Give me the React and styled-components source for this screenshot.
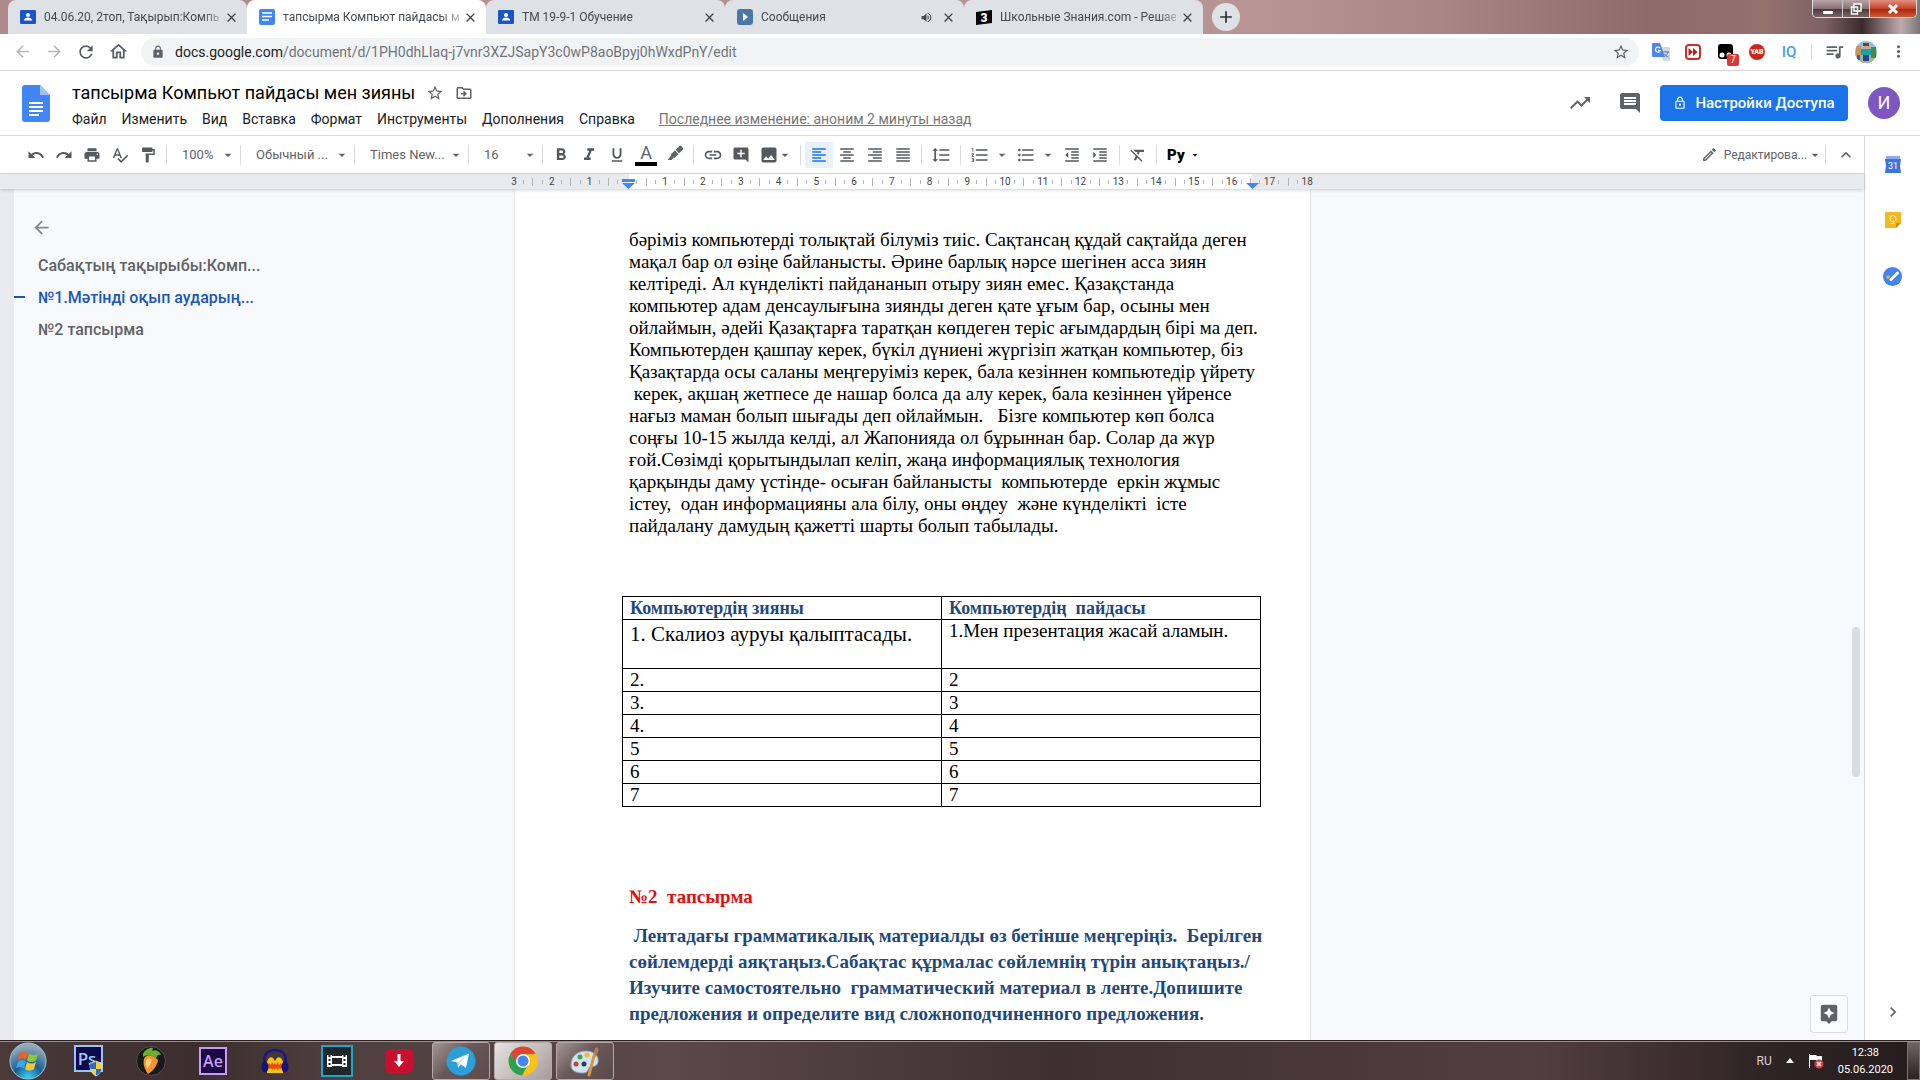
import styled, { createGlobalStyle } from 'styled-components';
import {
  MdAdd, MdAddComment, MdArrowBack, MdArrowDropDown, MdArrowForward, MdAssistant, MdClose,
  MdFormatAlignCenter, MdFormatAlignJustify, MdFormatAlignLeft, MdFormatAlignRight, MdFormatBold,
  MdFormatClear, MdFormatIndentDecrease, MdFormatIndentIncrease, MdFormatItalic,
  MdFormatLineSpacing, MdFormatListBulleted, MdFormatListNumbered, MdFormatPaint,
  MdFormatUnderlined, MdImage, MdInsertComment, MdKeyboardArrowRight, MdKeyboardArrowUp, MdLink,
  MdLock, MdMoreVert, MdOutlineDriveFileMove, MdOutlineEdit, MdOutlineHome, MdOutlineLock,
  MdPrint, MdQueueMusic, MdRedo, MdRefresh, MdSpellcheck, MdStarBorder, MdTrendingUp, MdUndo,
  MdVolumeUp,
} from 'react-icons/md';

const GlobalStyle = createGlobalStyle`
  * { box-sizing: border-box; }
  html, body, #root { height: 100%; }
  body { margin: 0; overflow: hidden; font-family: Roboto, sans-serif; }
  button { font: inherit; color: inherit; background: none; border: none; padding: 0; cursor: pointer; }
  svg { display: block; flex: none; }
`;

const tabs = [
  { title: '04.06.20, 2топ, Тақырып:Компь', icon: 'classroom' },
  { title: 'тапсырма Компьют пайдасы ме', icon: 'docs', active: true },
  { title: 'ТМ 19-9-1 Обучение', icon: 'classroom' },
  { title: 'Сообщения', icon: 'play', sound: true },
  { title: 'Школьные Знания.com - Решае', icon: 'znania' },
];

const menus = ['Файл', 'Изменить', 'Вид', 'Вставка', 'Формат', 'Инструменты', 'Дополнения', 'Справка'];

const bodyLines = [
  'бәріміз компьютерді толықтай білуміз тиіс. Сақтансаң құдай сақтайда деген',
  'мақал бар ол өзіңе байланысты. Әрине барлық нәрсе шегінен асса зиян',
  'келтіреді. Ал күнделікті пайдананып отыру зиян емес. Қазақстанда',
  'компьютер адам денсаулығына зиянды деген қате ұғым бар, осыны мен',
  'ойлаймын, әдейі Қазақтарға таратқан көпдеген теріс ағымдардың бірі ма деп.',
  'Компьютерден қашпау керек, бүкіл дүниені жүргізіп жатқан компьютер, біз',
  'Қазақтарда осы саланы меңгеруіміз керек, бала кезіннен компьютедір үйрету',
  ' керек, ақшаң жетпесе де нашар болса да алу керек, бала кезіннен үйренсе',
  'нағыз маман болып шығады деп ойлаймын.   Бізге компьютер көп болса',
  'соңғы 10-15 жылда келді, ал Жапонияда ол бұрыннан бар. Солар да жүр',
  'ғой.Сөзімді қорытындылап келіп, жаңа информациялық технология',
  'қарқынды даму үстінде- осыған байланысты  компьютерде  еркін жұмыс',
  'істеу,  одан информацияны ала білу, оны өңдеу  және күнделікті  істе',
  'пайдалану дамудың қажетті шарты болып табылады.',
];

const taskLines = [
  ' Лентадағы грамматикалық материалды өз бетінше меңгеріңіз.  Берілген',
  'сөйлемдерді аяқтаңыз.Сабақтас құрмалас сөйлемнің түрін анықтаңыз./',
  'Изучите самостоятельно  грамматический материал в ленте.Допишите',
  'предложения и определите вид сложноподчиненного предложения.',
];

const rows = [['2.', '2'], ['3.', '3'], ['4.', '4'], ['5', '5'], ['6', '6'], ['7', '7']];

const rulerMarks = [3, 2, 1, 0, 1, 2, 3, 4, 5, 6, 7, 8, 9, 10, 11, 12, 13, 14, 15, 16, 17, 18];

/* ---------- small drawings ---------- */

const ClassroomIcon = () => (
  <svg width="16" height="14" viewBox="0 0 16 14">
    <rect width="16" height="14" rx="1" fill="#1a56c4" />
    <circle cx="8" cy="5" r="2" fill="#fff" />
    <path d="M4 10.500c0-2 2-3 4-3s4 1 4 3z" fill="#fff" />
  </svg>
);

const DocsSmallIcon = () => (
  <svg width="16" height="16" viewBox="0 0 16 16">
    <rect width="16" height="16" rx="2" fill="#4285f4" />
    <path d="M3 4h10M3 7.500h10M3 11h7" stroke="#fff" strokeWidth="1.600" />
  </svg>
);

const PlayIcon = () => (
  <svg width="16" height="16" viewBox="0 0 16 16">
    <rect width="16" height="16" rx="3" fill="#4a76a8" />
    <path d="M6 4v8l5-4z" fill="#fff" />
  </svg>
);

const ZnaniaIcon = () => (
  <svg width="16" height="15" viewBox="0 0 16 15">
    <path d="M0 2 16 0v13L0 15z" fill="#000" />
    <text x="8" y="12" fontSize="12" fontWeight="900" fontFamily="Roboto" textAnchor="middle" fill="#fff">3</text>
  </svg>
);

const tabIcons = { classroom: ClassroomIcon, docs: DocsSmallIcon, play: PlayIcon, znania: ZnaniaIcon };

const DocsLogo = () => (
  <svg width="28" height="37" viewBox="0 0 28 37">
    <path d="M3 0h15l10 10v24a3 3 0 0 1-3 3H3a3 3 0 0 1-3-3V3a3 3 0 0 1 3-3z" fill="#4285f4" />
    <path d="M18 0l10 10H18z" fill="#a1c2fa" />
    <path d="M7 18h14M7 22h14M7 26h14M7 30h10" stroke="#fff" strokeWidth="2" />
  </svg>
);

const TranslateIcon = () => (
  <svg width="18" height="18" viewBox="0 0 18 18">
    <path d="M7 4h10a1 1 0 0 1 1 1v12a1 1 0 0 1-1 1h-6z" fill="#d5d8dc" />
    <path d="M11 9h6M14 8v1M16 9c-.5 2-2 4-4 5M12.500 11c1 1.500 2 2.500 4 3" stroke="#5b7fb5" fill="none" />
    <path d="M1 0h7l5 14H1a1 1 0 0 1-1-1V1a1 1 0 0 1 1-1z" fill="#4a86ee" />
    <path d="M8 5.200A2.500 2.500 0 1 0 8.300 7.400H6" stroke="#fff" strokeWidth="1.300" fill="none" />
  </svg>
);

const ForwardExtIcon = () => (
  <svg width="16" height="16" viewBox="0 0 16 16">
    <rect x="1" y="1" width="14" height="14" rx="3" fill="#fff" stroke="#c9302c" strokeWidth="2" />
    <path d="M3.500 4 8 8l-4.500 4zM8 4l4.500 4L8 12z" fill="#b3201c" />
  </svg>
);

const MonkeyIcon = () => (
  <svg width="15" height="15" viewBox="0 0 15 15">
    <rect width="15" height="15" rx="3" fill="#000" />
    <circle cx="4" cy="11" r="2.500" fill="#fff" />
    <circle cx="11" cy="11" r="2.500" fill="#fff" />
  </svg>
);

const PlayerAvatar = () => (
  <svg width="22" height="22" viewBox="0 0 22 22">
    <clipPath id="av"><circle cx="11" cy="11" r="11" /></clipPath>
    <g clipPath="url(#av)">
      <rect width="22" height="22" fill="#8fc0e4" />
      <rect y="13" width="22" height="9" fill="#a8b58a" />
      <rect x="1" y="5" width="5" height="9" fill="#c9925a" />
      <rect x="2" y="14" width="3" height="5" fill="#3f5d9c" />
      <rect x="16" y="6" width="5" height="11" fill="#4f8a3c" />
      <rect x="8" y="2" width="6" height="6" fill="#6a4129" />
      <rect x="8" y="5" width="6" height="3" fill="#d9a57c" />
      <rect x="6" y="8" width="10" height="6" fill="#12a5ae" />
      <rect x="8" y="14" width="6" height="6" fill="#2d3f9c" />
    </g>
  </svg>
);

const HighlighterIcon = () => (
  <svg width="20" height="20" viewBox="0 0 20 20" fill="#5f6368">
    <path d="M14 1.500a2 2 0 0 1 2.800 0l.7.700a2 2 0 0 1 0 2.800l-3.300 3.200-3.500-3.500zM9.800 5.500l3.700 3.700-3.800 3.600-1-.200-2.200 2.400H2.500l3.700-4.500-.200-1.200z" />
  </svg>
);

const CalendarIcon = () => (
  <svg width="16" height="17" viewBox="0 0 16 17">
    <path d="M1 0h14v4H1z" fill="#8ab0f0" />
    <path d="M0 3h16l-1 7 1 7H0l1-7z" fill="#3f74dd" />
    <text x="8" y="13" fontSize="9" fontFamily="Roboto" textAnchor="middle" fill="#fff">31</text>
  </svg>
);

const KeepIcon = () => (
  <svg width="16" height="16" viewBox="0 0 16 16">
    <path d="M1 0h14a1 1 0 0 1 1 1v10l-5 5H1a1 1 0 0 1-1-1V1a1 1 0 0 1 1-1z" fill="#f5b720" />
    <path d="M16 11l-5 5v-5z" fill="#d99012" />
    <path d="M6.500 9.500C4 7.500 5 3.500 8 3.500s4 4 1.500 6zM6.500 11.500h3" stroke="#fff" fill="none" />
  </svg>
);

const TasksIcon = () => (
  <svg width="19" height="19" viewBox="0 0 19 19">
    <circle cx="9.500" cy="9.500" r="9.500" fill="#4284f3" />
    <path d="M8 12.500 14.500 6" stroke="#fff" strokeWidth="3" strokeLinecap="round" />
    <circle cx="5" cy="10" r="1.800" fill="#e8b72a" />
  </svg>
);

const StartOrb = () => (
  <svg width="38" height="38" viewBox="0 0 38 38">
    <defs>
      <radialGradient id="orb" cx="50%" cy="95%" r="85%">
        <stop offset="0" stopColor="#35d0f5" />
        <stop offset="0.450" stopColor="#1a5f96" />
        <stop offset="1" stopColor="#8fa9b8" />
      </radialGradient>
    </defs>
    <circle cx="19" cy="19" r="18" fill="url(#orb)" stroke="#9fc4d8" />
    <path d="M10 11c3-2 6-2 9 0l-2 7c-3-2-5-2-8 0z" fill="#e8622c" />
    <path d="M20 11.500c3 2 6 2 9 0l-2 7c-3 2-6 2-9 0z" fill="#8cc63e" />
    <path d="M9 19.500c3-2 5-2 8 0l-2 7c-3-2-6-2-8 0z" fill="#3fa4e8" />
    <path d="M18 20c3 2 6 2 9 0l-2 7c-3 2-6 2-9 0z" fill="#fbc62c" />
  </svg>
);

const PhotoshopIcon = () => (
  <svg width="30" height="32" viewBox="0 0 30 32">
    <rect x="1" y="1" width="27" height="25" fill="#0c0a4a" stroke="#9fc0f5" strokeWidth="2" />
    <text x="13" y="20" fontSize="17" fontWeight="600" fontFamily="Open Sans" textAnchor="middle" fill="#9fc8fa">Ps</text>
    <path d="M16 18c3 0 4-1 6-2 2 1 4 2 6 2 0 6-1 10-6 13-5-3-6-7-6-13z" fill="#f6d02e" stroke="#dde6ee" />
    <path d="M22 16.500V24h-5.500c-.5-2-.5-3-.5-5.500 3 0 4-1 6-2zM22 24h5.500c-.7 3-2 5-5.500 6.500z" fill="#2a69c8" />
  </svg>
);

const FlIcon = () => (
  <svg width="30" height="32" viewBox="0 0 30 32">
    <circle cx="15" cy="16" r="14.500" fill="#17191a" stroke="#4c5254" />
    <path d="M9 12c5-3 9-1 13 3-1 6-5 11-10 14-4-5-6-13-3-17z" fill="#f9932a" />
    <path d="M11 14c2-1 4 0 5 1-1 4-3 7-5 9-1-4-2-8 0-10z" fill="#ffd08a" />
    <path d="M7 9c2-5 8-7 10-6l-1 3c4-2 8 1 9 4-3-1-4 0-5 4-3-3-8-5-13-2z" fill="#6fae2c" />
  </svg>
);

const AfterEffectsIcon = () => (
  <svg width="28" height="28" viewBox="0 0 28 28">
    <rect x="1" y="1" width="26" height="26" fill="#1c0a44" stroke="#c79af3" strokeWidth="2" />
    <text x="14" y="20" fontSize="16" fontWeight="600" fontFamily="Open Sans" textAnchor="middle" fill="#c79af3">Ae</text>
  </svg>
);

const AudacityIcon = () => (
  <svg width="28" height="26" viewBox="0 0 28 26">
    <path d="M4 16C1 6 8 2 14 2s13 4 10 14" stroke="#16168c" strokeWidth="2.500" fill="none" />
    <path d="M6 25V14c1-4 4-6 6-4l2 3 2-3c2-2 5 0 6 4v11z" fill="#f9c513" />
    <path d="M6 18l2-3 2 2 1-3 2 3 1-3 1 3 2-3 1 3 2-2 2 3-2 3-2-1-1 2-2-2-1 2-1-2-2 2-1-2-2 1z" fill="#ee4a12" />
    <ellipse cx="4" cy="19" rx="3.500" ry="5.500" fill="#13137c" />
    <ellipse cx="24" cy="19" rx="3.500" ry="5.500" fill="#13137c" />
  </svg>
);

const MovieIcon = () => (
  <svg width="32" height="32" viewBox="0 0 32 32">
    <rect x="1" y="1" width="30" height="30" fill="#20262a" stroke="#1fa5c9" strokeWidth="2" />
    <path d="M6 10h5v12H6zM21 10h5v12h-5z" fill="#fff" />
    <path d="M10 12h12M10 20h12" stroke="#fff" strokeWidth="2" />
    <path d="M8.500 10v12M23.500 10v12" stroke="#20262a" strokeWidth="2" strokeDasharray="2 2" />
  </svg>
);

const DownloadIcon = () => (
  <svg width="28" height="24" viewBox="0 0 28 24">
    <rect width="28" height="24" rx="5" fill="#c8102e" />
    <path d="M12.500 5h3v7H19l-5 6-5-6h3.500z" fill="#fff" />
  </svg>
);

const TelegramIcon = () => (
  <svg width="30" height="30" viewBox="0 0 30 30">
    <circle cx="15" cy="15" r="14.500" fill="#2a9fd8" />
    <path d="M5 15 23 7.500 20 22l-5-3.500-3 3-.5-5z" fill="#fff" />
    <path d="M11.500 16.500 20 10l-7 8-1 3.500z" fill="#c4dbe8" />
  </svg>
);

const ChromeIcon = () => (
  <svg width="30" height="30" viewBox="0 0 30 30">
    <circle cx="15" cy="15" r="14.500" fill="#fbc116" />
    <path d="M2.440 7.750A14.500 14.500 0 0 1 27.560 7.750L15 8.500 8.900 18.500z" fill="#dc4437" />
    <path d="M2.440 7.750A14.500 14.500 0 0 0 14 29.500l6.600-11.500H9.400z" fill="#2ca152" />
    <circle cx="15" cy="15" r="7" fill="#fff" />
    <circle cx="15" cy="15" r="5.500" fill="#4285f4" />
  </svg>
);

const PaintIcon = () => (
  <svg width="32" height="32" viewBox="0 0 32 32">
    <path d="M2 20C2 11 9 6 17 6s13 5 12 11c-1 5-5 4-8 5-3 2-1 6-7 6C7 28 2 26 2 20z" fill="#cfe3f2" stroke="#8fa9bf" />
    <circle cx="7" cy="19" r="2.500" fill="#d63a2c" />
    <circle cx="11" cy="12" r="2.500" fill="#3fa04a" />
    <circle cx="18" cy="10" r="2.500" fill="#f0b92c" />
    <circle cx="15" cy="19" r="2.500" fill="#1d3f66" />
    <path d="M26 3c3-2 4 1 3 4l-3 5-2-1z" fill="#b07a4c" />
    <path d="M25 11 20 30" stroke="#d99544" strokeWidth="3" strokeLinecap="round" />
  </svg>
);

const FlagIcon = () => (
  <svg width="16" height="16" viewBox="0 0 16 16">
    <path d="M1.500 1v14" stroke="#fff" />
    <path d="M2 2h6l1 1h5v5H9L8 7H2z" fill="#fff" />
    <circle cx="11" cy="11" r="4.500" fill="#d63a34" />
    <path d="M9 9l4 4M13 9l-4 4" stroke="#fff" strokeWidth="1.500" />
  </svg>
);

/* ---------- component ---------- */

const Tool = ({ icon: Icon, label, size = 18, ...rest }) => (
  <ToolButton aria-label={label} {...rest}><Icon size={size} /></ToolButton>
);

const App = () => {
  return (
    <Screen>
      <GlobalStyle />
      <TabStrip>
        {tabs.map((tab, i) => {
          const Icon = tabIcons[tab.icon];
          return (
            <Tab key={i} $active={tab.active}>
              <Icon />
              <TabTitle>{tab.title}</TabTitle>
              {tab.sound && <MdVolumeUp size={13} />}
              <TabClose aria-label="Закрыть"><MdClose size={15} /></TabClose>
            </Tab>
          );
        })}
        <NewTab aria-label="Новая вкладка"><MdAdd size={20} /></NewTab>
        <WindowButtons>
          <WindowButton $w={29} aria-label="Свернуть">
            <svg width="12" height="10"><path d="M1 7h10v3H1z" fill="#fff" /></svg>
          </WindowButton>
          <WindowButton $w={27} aria-label="Развернуть">
            <svg width="12" height="12"><path d="M4 1h7v7H4zM1.500 4h6v7h-6z" fill="#555" stroke="#fff" strokeWidth="1.500" /></svg>
          </WindowButton>
          <WindowButton $w={47} $close aria-label="Закрыть окно">
            <svg width="12" height="10"><path d="M2 1l8 8M10 1 2 9" stroke="#fff" strokeWidth="3" /></svg>
          </WindowButton>
        </WindowButtons>
      </TabStrip>

      <AddressBar>
        <NavButton $off aria-label="Назад"><MdArrowBack size={19} /></NavButton>
        <NavButton $off aria-label="Вперёд"><MdArrowForward size={19} /></NavButton>
        <NavButton aria-label="Обновить"><MdRefresh size={20} /></NavButton>
        <NavButton aria-label="Домой"><MdOutlineHome size={21} /></NavButton>
        <Omnibox>
          <MdLock size={14} />
          <Url><b>docs.google.com</b>/document/d/1PH0dhLIaq-j7vnr3XZJSapY3c0wP8aoBpyj0hWxdPnY/edit</Url>
          <MdStarBorder size={18} />
        </Omnibox>
        <Extensions>
          <Extension aria-label="Переводчик"><TranslateIcon /></Extension>
          <Extension aria-label="Перемотка"><ForwardExtIcon /></Extension>
          <Extension aria-label="Скрипты"><MonkeyIcon /><Badge>7</Badge></Extension>
          <Extension aria-label="YAB"><YabDot>YAB</YabDot></Extension>
          <Extension aria-label="IQ"><IqText>IQ</IqText></Extension>
          <ExtLine />
          <Extension aria-label="Плейлист"><MdQueueMusic size={21} /></Extension>
          <Extension aria-label="Профиль"><PlayerAvatar /></Extension>
          <Extension aria-label="Меню"><MdMoreVert size={19} /></Extension>
        </Extensions>
      </AddressBar>

      <DocsHeader>
        <DocsLogo />
        <HeaderText>
          <TitleRow>
            <DocTitle>тапсырма Компьют пайдасы мен зияны</DocTitle>
            <button aria-label="Пометить"><MdStarBorder size={18} /></button>
            <button aria-label="Переместить"><MdOutlineDriveFileMove size={18} /></button>
          </TitleRow>
          <MenuRow>
            {menus.map((m) => <MenuButton key={m}>{m}</MenuButton>)}
            <LastEdit href="#history">Последнее изменение: аноним 2 минуты назад</LastEdit>
          </MenuRow>
        </HeaderText>
        <HeaderActions>
          <button aria-label="Статистика"><MdTrendingUp size={24} /></button>
          <button aria-label="Комментарии"><MdInsertComment size={24} /></button>
          <ShareButton><MdOutlineLock size={14} />Настройки Доступа</ShareButton>
          <Avatar>И</Avatar>
        </HeaderActions>
      </DocsHeader>

      <Workspace>
        <Editor>
          <Toolbar>
            <Group>
              <Tool icon={MdUndo} label="Отменить" />
              <Tool icon={MdRedo} label="Повторить" />
              <Tool icon={MdPrint} label="Печать" />
              <Tool icon={MdSpellcheck} label="Правописание" />
              <Tool icon={MdFormatPaint} label="Копировать формат" />
            </Group>
            <Line />
            <Picker $w={69}>100%<MdArrowDropDown size={16} /></Picker>
            <Line />
            <Picker $w={109}>Обычный ...<MdArrowDropDown size={16} /></Picker>
            <Line />
            <Picker $w={109}>Times New...<MdArrowDropDown size={16} /></Picker>
            <Line />
            <Picker $w={69}>16<MdArrowDropDown size={16} /></Picker>
            <Line />
            <Group>
              <Tool icon={MdFormatBold} label="Полужирный" size={20} />
              <Tool icon={MdFormatItalic} label="Курсив" size={20} />
              <Tool icon={MdFormatUnderlined} label="Подчёркнутый" />
              <TextColor aria-label="Цвет текста">A</TextColor>
              <Tool icon={HighlighterIcon} label="Цвет выделения" />
            </Group>
            <Line />
            <Group $wide>
              <Tool icon={MdLink} label="Ссылка" size={20} />
              <Tool icon={MdAddComment} label="Комментарий" />
              <Tool icon={MdImage} label="Изображение" size={20} />
              <Caret $tight aria-label="Варианты изображения"><MdArrowDropDown size={16} /></Caret>
            </Group>
            <Line />
            <Group>
              <Tool icon={MdFormatAlignLeft} label="По левому краю" $on />
              <Tool icon={MdFormatAlignCenter} label="По центру" />
              <Tool icon={MdFormatAlignRight} label="По правому краю" />
              <Tool icon={MdFormatAlignJustify} label="По ширине" />
            </Group>
            <Line />
            <Group $wide>
              <Tool icon={MdFormatLineSpacing} label="Интервал" size={20} />
            </Group>
            <Line />
            <Group $wide>
              <Tool icon={MdFormatListNumbered} label="Нумерованный список" size={20} />
              <Caret aria-label="Варианты нумерации"><MdArrowDropDown size={16} /></Caret>
              <Tool icon={MdFormatListBulleted} label="Маркированный список" size={20} />
              <Caret aria-label="Варианты маркеров"><MdArrowDropDown size={16} /></Caret>
              <Tool icon={MdFormatIndentDecrease} label="Уменьшить отступ" />
              <Tool icon={MdFormatIndentIncrease} label="Увеличить отступ" />
            </Group>
            <Line />
            <Group>
              <Tool icon={MdFormatClear} label="Очистить формат" />
            </Group>
            <Line />
            <InputTool>Ру<MdArrowDropDown size={12} /></InputTool>
            <ModeButton><MdOutlineEdit size={17} />Редактирова...<MdArrowDropDown size={16} /></ModeButton>
            <Line />
            <CollapseButton aria-label="Скрыть меню"><MdKeyboardArrowUp size={20} /></CollapseButton>
          </Toolbar>

          <RulerBar>
            <Ruler>
              {rulerMarks.map((n, i) => (
                <RulerCell key={i}>
                  <Tick $h={i === 0 ? 0 : 8} />
                  <Tick $h={i === 0 ? 0 : 4} />
                  <RulerNumber>{n || ''}</RulerNumber>
                  <Tick $h={i === rulerMarks.length - 1 ? 0 : 4} />
                </RulerCell>
              ))}
              <Marker $left="16.6%">
                <svg width="13" height="10"><path d="M0 0h13v3H0zM0 4h13L6.500 10z" fill="#4285f4" /></svg>
              </Marker>
              <Marker $left="91.6%">
                <svg width="13" height="10"><path d="M0 4h13L6.500 10z" fill="#4285f4" /></svg>
              </Marker>
            </Ruler>
          </RulerBar>

          <Canvas>
            <Outline>
              <OutlineBack aria-label="Закрыть структуру"><MdArrowBack size={21} /></OutlineBack>
              <OutlineItem href="#topic">Сабақтың тақырыбы:Комп...</OutlineItem>
              <OutlineItem href="#task1" $active>№1.Мәтінді оқып аударың...</OutlineItem>
              <OutlineItem href="#task2">№2 тапсырма</OutlineItem>
            </Outline>
            <Page>
              <Paragraph>{bodyLines.join('\n')}</Paragraph>
              <DocTable>
                <thead>
                  <tr>
                    <th>Компьютердің зияны</th>
                    <th>Компьютердің&nbsp; пайдасы</th>
                  </tr>
                </thead>
                <tbody>
                  <TallRow>
                    <BigCell>1. Скалиоз ауруы қалыптасады.</BigCell>
                    <td>1.Мен презентация жасай аламын.</td>
                  </TallRow>
                  {rows.map(([a, b]) => (
                    <tr key={b}><td>{a}</td><td>{b}</td></tr>
                  ))}
                </tbody>
              </DocTable>
              <TaskTitle>№2&nbsp; тапсырма</TaskTitle>
              <TaskText>{taskLines.join('\n')}</TaskText>
            </Page>
            <RightSpace />
            <ScrollThumb />
            <ExploreButton aria-label="Анализ данных"><MdAssistant size={22} /></ExploreButton>
          </Canvas>
        </Editor>

        <SidePanel>
          <button aria-label="Календарь"><CalendarIcon /></button>
          <button aria-label="Keep"><KeepIcon /></button>
          <button aria-label="Задачи"><TasksIcon /></button>
          <PanelToggle aria-label="Скрыть панель"><MdKeyboardArrowRight size={20} /></PanelToggle>
        </SidePanel>
      </Workspace>

      <Taskbar>
        <TaskButton $first aria-label="Пуск"><StartOrb /></TaskButton>
        <TaskButton aria-label="Photoshop"><PhotoshopIcon /></TaskButton>
        <TaskButton aria-label="FL Studio"><FlIcon /></TaskButton>
        <TaskButton aria-label="After Effects"><AfterEffectsIcon /></TaskButton>
        <TaskButton aria-label="Audacity"><AudacityIcon /></TaskButton>
        <TaskButton aria-label="Movie Studio"><MovieIcon /></TaskButton>
        <TaskButton aria-label="Загрузки"><DownloadIcon /></TaskButton>
        <TaskButton $open aria-label="Telegram"><TelegramIcon /></TaskButton>
        <TaskButton $open $current aria-label="Chrome"><ChromeIcon /></TaskButton>
        <TaskButton $open aria-label="Paint"><PaintIcon /></TaskButton>
        <Tray>
          <Lang>RU</Lang>
          <svg width="8" height="5"><path d="M0 5l4-5 4 5z" fill="#fff" /></svg>
          <FlagIcon />
          <Clock><span>12:38</span><span>05.06.2020</span></Clock>
          <ShowDesktop aria-label="Показать рабочий стол" />
        </Tray>
      </Taskbar>
    </Screen>
  );
};

/* ---------- browser ---------- */

const Screen = styled.div`
  display: flex;
  flex-direction: column;
  height: 100vh;
  overflow: hidden;
  background: #fff;
  color: #5f6368;
`;

const TabStrip = styled.div`
  display: flex;
  align-items: flex-start;
  height: 34px;
  padding-left: 8px;
  flex: none;
  background: linear-gradient(90deg, #b08a8a 0%, #b89494 66%, #a98585 75%, #8e6a6a 86%, #94706f 92%, #7d6263 95%, #3a2a2a 97%, #c0aab0 99%, #777 100%);
`;

const Tab = styled.div`
  display: flex;
  align-items: center;
  gap: 8px;
  width: 239px;
  height: 34px;
  padding: 0 8px 0 12px;
  border-radius: 8px 8px 0 0;
  background: ${(p) => (p.$active ? '#fff' : '#dee1e6')};
  color: #45494d;
`;

const TabTitle = styled.span`
  flex: 1;
  min-width: 0;
  margin-right: -4px;
  white-space: nowrap;
  font-size: 12px;
  line-height: 16px;
  mask-image: linear-gradient(90deg, #000 90%, rgba(0, 0, 0, 0.3));
`;

const TabClose = styled.button`
  color: #3c4043;
`;

const NewTab = styled.button`
  display: flex;
  align-items: center;
  justify-content: center;
  width: 28px;
  height: 28px;
  margin: 3px 0 0 9px;
  border-radius: 50%;
  background: #dee1e6;
  color: #2b2e31;
`;

const WindowButtons = styled.div`
  display: flex;
  margin: 0 3px 0 auto;
  border: 1px solid #ddd;
  border-top: none;
  border-radius: 0 0 5px 5px;
  overflow: hidden;
`;

const WindowButton = styled.button`
  display: flex;
  align-items: center;
  justify-content: center;
  width: ${(p) => p.$w}px;
  height: 17px;
  background: ${(p) => (p.$close
    ? 'linear-gradient(#e0907c, #c8432a 50%, #a82410 51%, #d05a30)'
    : 'linear-gradient(#b8a4a6, #8a7274 50%, #4a3638 51%, #7a6466)')};
  & + & { border-left: 1px solid #ccc; }
`;

const AddressBar = styled.div`
  display: flex;
  align-items: center;
  height: 37px;
  padding: 0 6px 1px;
  flex: none;
  border-bottom: 1px solid #d5d7da;
`;

const NavButton = styled.button`
  display: flex;
  align-items: center;
  justify-content: center;
  width: 32px;
  flex: none;
  color: ${(p) => (p.$off ? '#b4b6b9' : '#5a5d61')};
`;

const Omnibox = styled.div`
  display: flex;
  align-items: center;
  gap: 10px;
  flex: 1;
  min-width: 0;
  height: 28px;
  margin-left: 7px;
  padding: 0 9px 0 10px;
  border-radius: 14px;
  background: #f1f3f4;
`;

const Url = styled.span`
  flex: 1;
  overflow: hidden;
  white-space: nowrap;
  font-size: 14px;
  color: #70757a;
  b { font-weight: normal; color: #202124; }
`;

const Extensions = styled.div`
  display: flex;
  align-items: center;
  margin-left: 6px;
  flex: none;
`;

const Extension = styled.button`
  position: relative;
  display: flex;
  align-items: center;
  justify-content: center;
  width: 32px;
  height: 28px;
`;

const Badge = styled.span`
  position: absolute;
  right: 2px;
  bottom: 0;
  width: 12px;
  height: 12px;
  border-radius: 2px;
  background: #d93a36;
  color: #fff;
  font-size: 10px;
  line-height: 12px;
`;

const YabDot = styled.span`
  width: 16px;
  height: 16px;
  border-radius: 50%;
  background: #c8281f;
  color: #fff;
  font-size: 7px;
  font-weight: 900;
  line-height: 16px;
`;

const IqText = styled.span`
  font-size: 15px;
  font-weight: 500;
  color: #4a9be8;
`;

const ExtLine = styled.span`
  width: 1px;
  height: 16px;
  margin: 0 6px;
  background: #d0d2d5;
`;

/* ---------- docs header ---------- */

const DocsHeader = styled.header`
  display: flex;
  align-items: center;
  height: 65px;
  padding: 0 20px 0 22px;
  flex: none;
  border-bottom: 1px solid #d8dadd;
`;

const HeaderText = styled.div`
  display: flex;
  flex-direction: column;
  gap: 4px;
  margin-left: 22px;
  padding-top: 4px;
`;

const TitleRow = styled.div`
  display: flex;
  align-items: center;
  gap: 11px;
`;

const DocTitle = styled.h1`
  margin: 0;
  font-size: 18px;
  line-height: 24px;
  font-weight: 400;
  color: #000;
`;

const MenuRow = styled.nav`
  display: flex;
  align-items: center;
  gap: 15px;
`;

const MenuButton = styled.button`
  font-size: 14px;
  line-height: 20px;
  color: #202124;
`;

const LastEdit = styled.a`
  margin-left: 9px;
  font-size: 14px;
  line-height: 20px;
  color: #777;
`;

const HeaderActions = styled.div`
  display: flex;
  align-items: center;
  gap: 26px;
  margin-left: auto;
`;

const ShareButton = styled.button`
  display: flex;
  align-items: center;
  justify-content: center;
  gap: 8px;
  width: 188px;
  height: 36px;
  margin: 0 -6px 0 -8px;
  border-radius: 4px;
  background: #1a73e8;
  color: #fff;
  font-size: 15px;
  font-weight: 500;
`;

const Avatar = styled.div`
  width: 32px;
  height: 32px;
  border-radius: 50%;
  background: #7e57c2;
  color: #fff;
  font-size: 18px;
  line-height: 32px;
  text-align: center;
`;

/* ---------- toolbar ---------- */

const Workspace = styled.div`
  display: flex;
  flex: 1;
  min-height: 0;
`;

const Editor = styled.main`
  display: flex;
  flex-direction: column;
  flex: 1;
  min-width: 0;
`;

const Toolbar = styled.div`
  display: flex;
  align-items: center;
  height: 38px;
  padding-left: 20px;
  flex: none;
  border-bottom: 1px solid #d8dadd;
  font-size: 13px;
`;

const Group = styled.div`
  display: flex;
  align-items: center;
  padding: 0 ${(p) => (p.$wide ? 3 : 2)}px;
`;

const Line = styled.span`
  width: 1px;
  height: 20px;
  margin: 0 2px;
  background: #d8dadd;
`;

const ToolButton = styled.button`
  display: flex;
  align-items: center;
  justify-content: center;
  width: 28px;
  height: 26px;
  border-radius: 2px;
  background: ${(p) => (p.$on ? '#e8f0fe' : 'none')};
  color: ${(p) => (p.$on ? '#1a73e8' : '#55595d')};
`;

const Picker = styled.button`
  display: flex;
  align-items: center;
  justify-content: space-between;
  width: ${(p) => p.$w}px;
  padding: 0 2px 0 13px;
  white-space: nowrap;
`;

const TextColor = styled.button`
  width: 22px;
  margin: 0 4px;
  border-bottom: 4px solid #000;
  font-size: 18px;
  line-height: 18px;
`;

const Caret = styled.button`
  width: 18px;
  margin-left: ${(p) => (p.$tight ? -6 : 0)}px;
`;

const InputTool = styled.button`
  display: flex;
  align-items: center;
  gap: 4px;
  margin-left: 8px;
  color: #000;
  font-size: 15px;
  font-weight: 900;
`;

const ModeButton = styled.button`
  display: flex;
  align-items: center;
  margin-left: auto;
  font-size: 12px;
  white-space: nowrap;
  svg:first-child { margin-right: 6px; }
`;

const CollapseButton = styled.button`
  display: flex;
  justify-content: center;
  width: 36px;
`;

/* ---------- ruler ---------- */

const RulerBar = styled.div`
  display: flex;
  justify-content: center;
  height: 15px;
  padding-right: 52px;
  flex: none;
  background: #e8eaed;
  box-shadow: 0 1px 3px rgba(60, 64, 67, 0.25);
  z-index: 1;
`;

const Ruler = styled.div`
  position: relative;
  display: flex;
  width: 831px;
  background: linear-gradient(90deg, transparent 16.6%, #fff 16.6%, #fff 91.6%, transparent 91.6%);
`;

const RulerCell = styled.div`
  display: grid;
  grid-template-columns: repeat(4, 1fr);
  align-items: center;
  justify-items: center;
  flex: 1;
`;

const Tick = styled.span`
  width: 1px;
  height: ${(p) => p.$h}px;
  background: #b4b6b9;
`;

const RulerNumber = styled.span`
  width: 0;
  display: flex;
  justify-content: center;
  font-size: 10px;
  color: #444;
`;

const Marker = styled.span`
  position: absolute;
  left: ${(p) => p.$left};
  bottom: 0;
  margin-left: -6px;
`;

/* ---------- document ---------- */

const Canvas = styled.div`
  position: relative;
  display: flex;
  flex: 1;
  min-height: 0;
  padding-right: 53px;
  overflow: hidden;
  background: #f8f9fa;
`;

const Outline = styled.aside`
  display: flex;
  flex-direction: column;
  align-items: flex-start;
  flex: 1 1 0;
  min-width: 0;
  padding-top: 28px;
  border-left: 14px solid #e8eaed;
`;

const OutlineBack = styled.button`
  margin: 0 0 11px 17px;
  color: #80868b;
`;

const OutlineItem = styled.a`
  display: flex;
  align-items: center;
  height: 32px;
  padding-left: 24px;
  font-size: 16px;
  font-weight: 500;
  white-space: nowrap;
  text-decoration: none;
  color: ${(p) => (p.$active ? '#1a57b8' : '#5f6368')};
  &::before {
    content: '';
    width: 11px;
    height: 2px;
    margin: 0 13px 0 -24px;
    background: ${(p) => (p.$active ? '#1a57b8' : 'transparent')};
  }
`;

const Page = styled.article`
  width: 795px;
  flex: none;
  padding: 40px 49px 0 114px;
  background: #fff;
  box-shadow: 0 0 2px rgba(60, 64, 67, 0.3);
  font-family: 'Liberation Serif', serif;
  font-size: 19px;
  color: #000;
`;

const Paragraph = styled.p`
  margin: 0;
  line-height: 22px;
  white-space: pre;
`;

const DocTable = styled.table`
  width: 639px;
  margin: 59px 0 0 -7px;
  border-collapse: collapse;
  table-layout: fixed;
  th, td {
    height: 23px;
    padding: 0 7px;
    border: 1px solid #000;
    line-height: 22px;
    text-align: left;
    vertical-align: top;
  }
  th {
    font-size: 18px;
    color: #1f497d;
  }
`;

const TallRow = styled.tr`
  height: 49px;
`;

const BigCell = styled.td`
  font-size: 21px;
  && { line-height: 28px; }
`;

const TaskTitle = styled.h2`
  margin: 77px 0 13px;
  font-size: 19px;
  line-height: 26px;
  color: #e01010;
`;

const TaskText = styled.p`
  margin: 0;
  line-height: 26px;
  font-weight: bold;
  white-space: pre;
  color: #1f497d;
`;

const RightSpace = styled.div`
  flex: 1 1 0;
`;

const ScrollThumb = styled.div`
  position: absolute;
  top: 438px;
  right: 4px;
  width: 8px;
  height: 150px;
  border-radius: 4px;
  background: #dadce0;
`;

const ExploreButton = styled.button`
  position: absolute;
  right: 16px;
  bottom: 7px;
  display: flex;
  align-items: center;
  justify-content: center;
  width: 38px;
  height: 38px;
  border: 1px solid #dadce0;
  border-radius: 3px;
  background: #fbfcfd;
`;

const SidePanel = styled.aside`
  display: flex;
  flex-direction: column;
  align-items: center;
  gap: 39px;
  width: 56px;
  padding-top: 20px;
  flex: none;
  border-left: 1px solid #d8dadd;
`;

const PanelToggle = styled.button`
  margin: auto 0 18px;
`;

/* ---------- taskbar ---------- */

const Taskbar = styled.footer`
  display: flex;
  align-items: center;
  height: 40px;
  flex: none;
  border-top: 1px solid #2b2122;
  box-shadow: inset 0 1px 0 #9a8c8d;
  background: linear-gradient(90deg, #4a3a3a 0%, #3c2e2e 10%, #503f3f 18%, #5b4848 35%, #3f3030 55%, #523e3e 80%, #2e2425 92%, #251c1d 100%);
`;

const TaskButton = styled.button`
  display: flex;
  align-items: center;
  justify-content: center;
  width: ${(p) => (p.$first ? 56 : 58)}px;
  height: 38px;
  margin-right: 4px;
  border: ${(p) => (p.$open ? '1px solid #b5a8a8' : 'none')};
  border-radius: 3px;
  background: ${(p) => (p.$current
    ? 'linear-gradient(135deg, #e8e2e2, #a89c9c)'
    : p.$open ? 'linear-gradient(135deg, #a39696, #6a5858 45%, #5c4a4a)' : 'none')};
`;

const Tray = styled.div`
  display: flex;
  align-items: center;
  gap: 14px;
  height: 100%;
  margin-left: auto;
  color: #fff;
  font-size: 12px;
`;

const Lang = styled.span`
  color: #d8d0d0;
`;

const Clock = styled.div`
  display: flex;
  flex-direction: column;
  align-items: center;
  font-size: 11px;
  line-height: 17px;
`;

const ShowDesktop = styled.button`
  width: 13px;
  height: 38px;
  border: 1px solid #7d7374;
  background: linear-gradient(#6e6465, #2a2122);
`;

export default App;
